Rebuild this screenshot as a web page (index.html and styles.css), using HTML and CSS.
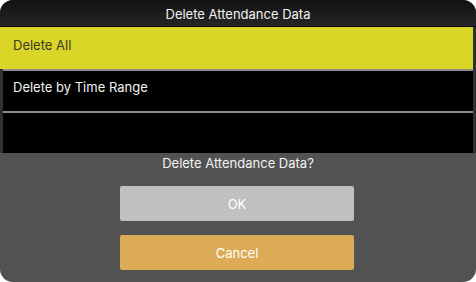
FILE: index.html
```html
<!DOCTYPE html>
<html>
<head>
<meta charset="utf-8">
<link rel="stylesheet" href="styles.css">
</head>
<body>
<div class="dialog">
  <div class="header">Delete Attendance Data</div>
  <div class="list">
    <div class="item selected">Delete All</div>
    <div class="sep"></div>
    <div class="item">Delete by Time Range</div>
    <div class="sep"></div>
    <div class="item"></div>
  </div>
  <div class="body">
    <div class="message">Delete Attendance Data?</div>
    <div class="btn ok">OK</div>
    <div class="btn cancel">Cancel</div>
  </div>
</div>
</body>
</html>
```

FILE: styles.css
```css
html, body {
  margin: 0;
  padding: 0;
  background: #ffffff;
}
body {
  font-family: Inter, "Noto Sans", "Liberation Sans", sans-serif;
  font-size: 13px;
}
.dialog {
  width: 476px;
  height: 282px;
  border-radius: 13px;
  overflow: hidden;
  background: #525253;
  display: flex;
  flex-direction: column;
}
.header {
  height: 26px;
  line-height: 29px;
  border-bottom: 1px solid #0a0a0a;
  background: linear-gradient(#111111, #262626);
  color: #f2f2f2;
  text-align: center;
  font-size: 13px;
}
.list {
  background: #313131;
  padding: 0 3px;
  display: flex;
  flex-direction: column;
}
.item {
  height: 40px;
  background: #000000;
  color: #f2f2f2;
  padding-left: 10px;
  line-height: 33px;
  font-size: 13px;
}
.item.selected {
  height: 42px;
  line-height: 37px;
  background: #d9d627;
  color: #3a3a2a;
  margin-left: -3px;
  padding-left: 13px;
}
.sep {
  height: 2px;
  background: #8e8e8e;
}
.body {
  flex: 1;
  display: flex;
  flex-direction: column;
  align-items: flex-start;
  padding-left: 120px;
}
.message {
  align-self: center;
  margin-left: -120px;
  color: #f2f2f2;
  line-height: 20px;
  height: 20px;
}
.btn {
  width: 234px;
  height: 35px;
  line-height: 36px;
  text-align: center;
  color: #ffffff;
  border-radius: 2px;
  font-size: 13px;
}
.ok {
  margin-top: 13px;
  background: #c0c0c0;
}
.cancel {
  margin-top: 14px;
  background: #dcab55;
}
```
